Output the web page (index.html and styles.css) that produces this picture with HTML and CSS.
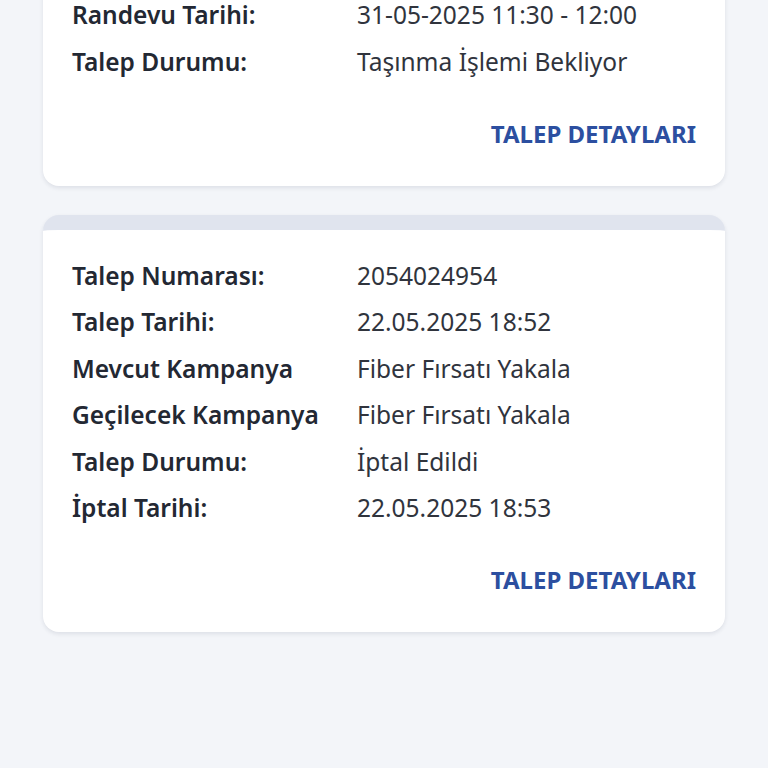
FILE: index.html
```html
<html>
<head>
    <meta content="text/html;charset=utf-8" http-equiv="Content-Type"/>
    <link rel="stylesheet" href="styles.css">
</head>
<body>
<div class="list">
    <div class="card">
        <div class="rows">
            <div class="row"><span class="label">Randevu Tarihi:</span><span class="value">31-05-2025 11:30 - 12:00</span></div>
            <div class="row"><span class="label">Talep Durumu:</span><span class="value">Taşınma İşlemi Bekliyor</span></div>
        </div>
        <div class="actions"><a class="details">TALEP DETAYLARI</a></div>
    </div>

    <div class="card">
        <div class="rows">
            <div class="row"><span class="label">Talep Numarası:</span><span class="value">2054024954</span></div>
            <div class="row"><span class="label">Talep Tarihi:</span><span class="value">22.05.2025 18:52</span></div>
            <div class="row"><span class="label">Mevcut Kampanya</span><span class="value">Fiber Fırsatı Yakala</span></div>
            <div class="row"><span class="label">Geçilecek Kampanya</span><span class="value">Fiber Fırsatı Yakala</span></div>
            <div class="row"><span class="label">Talep Durumu:</span><span class="value">İptal Edildi</span></div>
            <div class="row"><span class="label">İptal Tarihi:</span><span class="value">22.05.2025 18:53</span></div>
        </div>
        <div class="actions"><a class="details">TALEP DETAYLARI</a></div>
    </div>
</div>
</body>
</html>
```

FILE: styles.css
```css
body {
    margin: 0;
    background: #f3f5f9;
    font-family: "Noto Sans", "Open Sans", sans-serif;
    color: #262b35;
}
.list {
    display: flex;
    flex-direction: column;
    gap: 29px;
    padding: 0 43px;
    margin-top: -46px;
}
.card {
    background: #ffffff;
    border-top: 15px solid #e0e4ee;
    border-radius: 16px;
    box-shadow: 0 2px 4px rgba(30, 40, 70, 0.10);
    padding: 32px 29px 37px 29px;
}
.rows {
    display: flex;
    flex-direction: column;
    gap: 18.5px;
}
.row {
    display: grid;
    grid-template-columns: 285px 1fr;
    line-height: 28px;
    font-size: 24.5px;
}
.label {
    font-weight: 600;
    color: #232833;
}
.value {
    font-weight: 400;
    color: #30343d;
}
.actions {
    display: flex;
    justify-content: flex-end;
    margin-top: 43px;
}
.details {
    font-size: 24px;
    line-height: 30px;
    font-weight: 700;
    color: #2c4fa0;
}
```
